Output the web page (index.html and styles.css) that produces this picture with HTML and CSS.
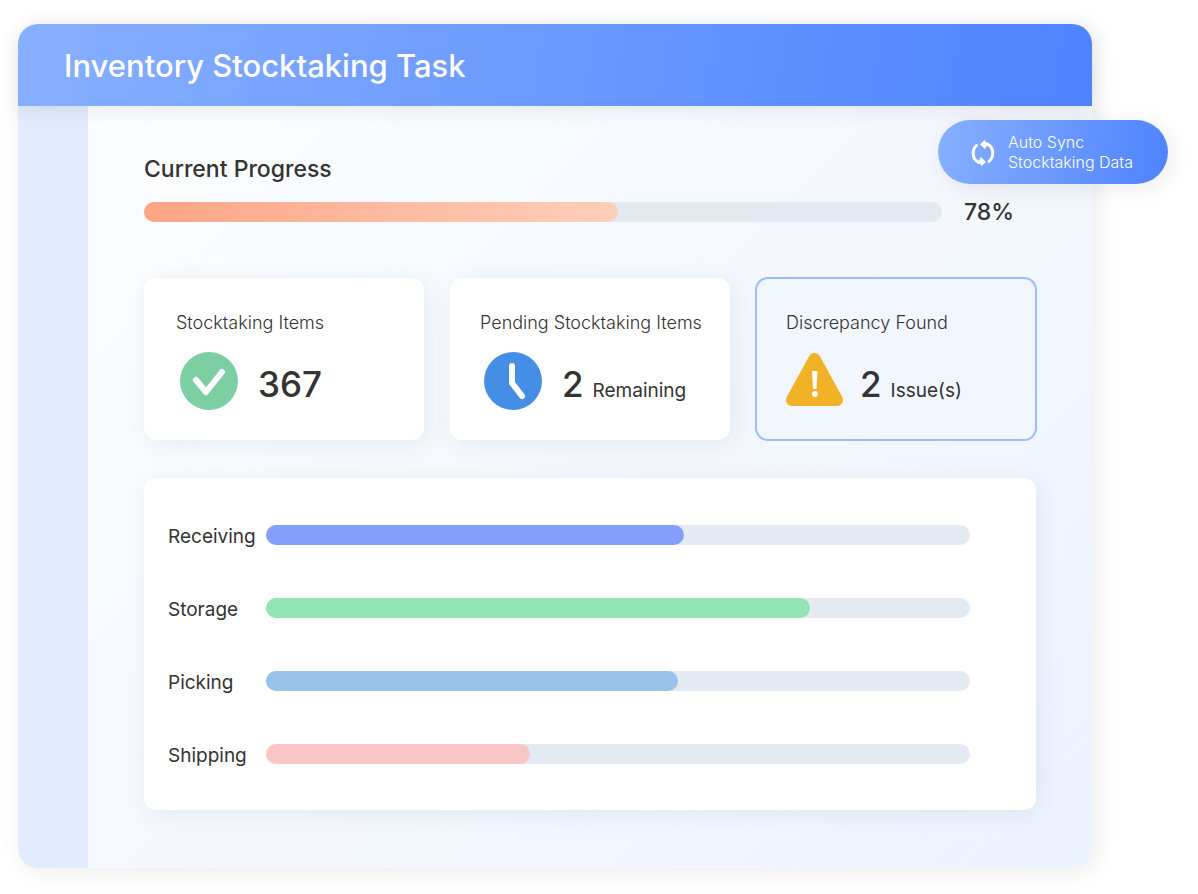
FILE: index.html
```html
<!DOCTYPE html>
<html lang="en">
<head>
  <meta charset="utf-8">
  <meta name="viewport" content="width=device-width, initial-scale=1">
  <title>Inventory Stocktaking Task</title>
  <link rel="stylesheet" href="styles.css">
</head>
<body>
  <div class="window">
    <header class="header">
      <h1>Inventory Stocktaking Task</h1>
    </header>
    <div class="body">
      <aside class="sidebar"></aside>
      <main class="main">
        <section class="progress">
          <h2 id="progress_title">Current Progress</h2>
          <div class="progress-row">
            <div class="bar" role="progressbar" aria-labelledby="progress_title" aria-valuenow="78">
              <div class="fill fill-total" style="width: 59.4%"></div>
            </div>
            <div class="percent">78%</div>
          </div>
        </section>

        <section class="cards">
          <div class="card card-done">
            <h3>Stocktaking Items</h3>
            <div class="stat">
              <svg class="icon" viewBox="0 0 58 58" aria-hidden="true">
                <circle cx="29" cy="29" r="29" fill="#7dcea3"/>
                <path d="M16 28l10 12 16-20" fill="none" stroke="#fff" stroke-width="6" stroke-linecap="round" stroke-linejoin="round"/>
              </svg>
              <span class="value">367</span>
            </div>
          </div>
          <div class="card">
            <h3>Pending Stocktaking Items</h3>
            <div class="stat">
              <svg class="icon" viewBox="0 0 58 58" aria-hidden="true">
                <circle cx="29" cy="29" r="29" fill="#458ee6"/>
                <path d="M28 14v17l10 13" fill="none" stroke="#fff" stroke-width="6" stroke-linecap="round"/>
              </svg>
              <span class="value">2</span>
              <span class="unit">Remaining</span>
            </div>
          </div>
          <div class="card card-alert">
            <h3>Discrepancy Found</h3>
            <div class="stat">
              <svg class="icon" viewBox="0 0 58 58" aria-hidden="true">
                <path d="M28.500 7L51 48H6z" fill="#f1b227" stroke="#f1b227" stroke-width="12" stroke-linejoin="round"/>
                <path d="M26 19h5.500l-1 18h-3.500z" fill="#fff"/>
                <circle cx="29" cy="42" r="3" fill="#fff"/>
              </svg>
              <span class="value">2</span>
              <span class="unit">Issue(s)</span>
            </div>
          </div>
        </section>

        <section class="panel">
          <div class="row">
            <span class="label" id="receiving">Receiving</span>
            <div class="bar" role="progressbar" aria-labelledby="receiving" aria-valuenow="59">
              <div class="fill fill-receiving" style="width: 59.4%"></div>
            </div>
          </div>
          <div class="row">
            <span class="label" id="storage">Storage</span>
            <div class="bar" role="progressbar" aria-labelledby="storage" aria-valuenow="77">
              <div class="fill fill-storage" style="width: 77.3%"></div>
            </div>
          </div>
          <div class="row">
            <span class="label" id="picking">Picking</span>
            <div class="bar" role="progressbar" aria-labelledby="picking" aria-valuenow="59">
              <div class="fill fill-picking" style="width: 58.5%"></div>
            </div>
          </div>
          <div class="row">
            <span class="label" id="shipping">Shipping</span>
            <div class="bar" role="progressbar" aria-labelledby="shipping" aria-valuenow="38">
              <div class="fill fill-shipping" style="width: 37.5%"></div>
            </div>
          </div>
        </section>
      </main>
    </div>

    <button type="button" class="sync">
      <svg viewBox="0 -1 26 28" aria-hidden="true">
        <path d="M6.500 6.500C1.500 11 2 20.500 9 23.500M19 22.500C24.500 17.500 24 8 17 5" fill="none" stroke="#fff" stroke-width="3" stroke-linecap="round"/>
        <path d="M10 5.500l5-5v2l3 1.500-2 4.500-1 1.500zM16 23l-5 4.500v-2l-3-1.500 2-4.500 1-1.500z" fill="#fff"/>
      </svg>
      <span>Auto Sync<br>Stocktaking Data</span>
    </button>
  </div>
</body>
</html>
```
FILE: styles.css
```css
body {
  margin: 0;
  background: #FFFFFF;
  color: #333333;
  font-family: Inter, "Liberation Sans", sans-serif;
  font-size: 19px;
}

h1,
h2,
h3 {
  margin: 0;
}

.window {
  position: relative;
  margin: 24px 106px 26px 18px;
  border-radius: 20px;
  box-shadow: 4px 4px 24px rgba(0, 0, 0, 0.08);
}

.header {
  position: relative;
  padding: 22px 46px 20px;
  border-radius: 20px 20px 0 0;
  background: linear-gradient(100deg, #87B0FF, #4E82FF);
  box-shadow: 0 4px 20px rgba(0, 0, 0, 0.08);
}

h1 {
  color: #FFFFFF;
  font-size: 31px;
  font-weight: 500;
  line-height: 40px;
}

.body {
  display: flex;
  border-radius: 0 0 20px 20px;
  overflow: hidden;
  background: linear-gradient(135deg, #FDFDFF, #F7FBFE 30%, #F1F5FE 75%, #EBF3FF);
}

.sidebar {
  flex: none;
  width: 70px;
  background: #E0EBFE;
}

.main {
  flex: 1;
  padding: 47px 56px 58px;
}

h2,
.percent {
  font-size: 23px;
  font-weight: 500;
  line-height: 32px;
}

.progress-row {
  display: flex;
  align-items: center;
  gap: 22px;
  margin-top: 11px;
}

.percent {
  width: 72px;
}

.bar {
  flex: 1;
  height: 20px;
  border-radius: 10px;
  background: #E4EAF1;
}

.fill {
  height: 100%;
  border-radius: 10px;
}

.fill-total {
  background: linear-gradient(100deg, #FCA585, #FFCFB9);
}

.fill-receiving {
  background: #859FFC;
}

.fill-storage {
  background: #93E3B7;
}

.fill-picking {
  background: #98C2EA;
}

.fill-shipping {
  background: #F9C6C6;
}

.cards {
  display: grid;
  grid-template-columns: repeat(3, 1fr);
  gap: 26px;
  margin-top: 50px;
}

.card,
.panel {
  border-radius: 12px;
  background: #FFFFFF;
  box-shadow: 4px 4px 24px rgba(40, 60, 80, 0.08);
}

.card {
  padding: 31px 20px 30px 30px;
}

.card-done {
  padding-left: 32px;
}

.card-alert {
  background: #F1F6FF;
  outline: 2px solid #9DBBFF;
  outline-offset: -1px;
  box-shadow: none;
}

h3 {
  font-size: 18px;
  font-weight: 300;
  line-height: 28px;
}

.stat {
  display: flex;
  align-items: baseline;
  margin-top: 15px;
}

.icon {
  align-self: center;
  width: 58px;
  height: 58px;
  margin: 0 20px 0 4px;
}

.card-alert .icon {
  margin: 0 16px 0 0;
}

.value {
  padding-top: 6px;
  font-size: 35px;
  font-weight: 500;
  line-height: 52px;
}

.unit {
  margin-left: 9px;
}

.panel {
  display: flex;
  flex-direction: column;
  gap: 45px;
  margin-top: 38px;
  padding: 43px 66px 42px 24px;
}

.row {
  display: flex;
  align-items: center;
}

.label {
  width: 98px;
  padding-top: 4px;
  line-height: 24px;
}

.sync {
  position: absolute;
  top: 96px;
  right: -76px;
  display: flex;
  align-items: center;
  gap: 12px;
  width: 230px;
  padding: 12px 32px;
  border: none;
  border-radius: 32px;
  background: linear-gradient(100deg, #87B0FF, #4E82FF);
  box-shadow: 4px 4px 24px rgba(0, 0, 0, 0.08);
  color: #FFFFFF;
  font-family: inherit;
  font-size: 16px;
  font-weight: 300;
  line-height: 20px;
  text-align: left;
  white-space: nowrap;
  cursor: pointer;
}

.sync svg {
  flex: none;
  width: 26px;
  height: 28px;
}
```
